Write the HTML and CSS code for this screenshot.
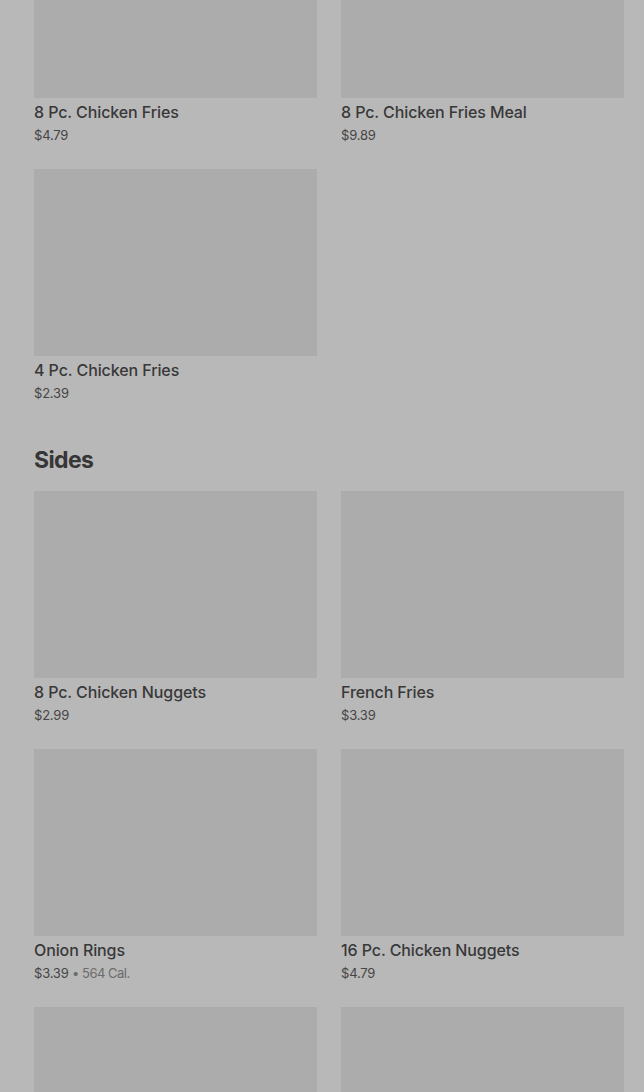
FILE: index.html
```html
<!DOCTYPE html>
<html lang="en">
<head>
  <meta charset="UTF-8" />
  <meta name="viewport" content="width=device-width, initial-scale=1.0" />
  <title>Menu</title>
  <link rel="stylesheet" href="styles.css">
</head>
<body>
  <main class="menu">
    <!-- Chicken Fries (scrolled part way) -->
    <section class="section section-scrolled">
      <div class="grid">
        <div class="item">
          <div class="thumb"></div>
          <div class="name">8 Pc. Chicken Fries</div>
          <div class="price">$4.79</div>
        </div>
        <div class="item">
          <div class="thumb"></div>
          <div class="name">8 Pc. Chicken Fries Meal</div>
          <div class="price">$9.89</div>
        </div>
        <div class="item">
          <div class="thumb"></div>
          <div class="name">4 Pc. Chicken Fries</div>
          <div class="price">$2.39</div>
        </div>
      </div>
    </section>

    <section class="section">
      <h2 class="section-title">Sides</h2>
      <div class="grid">
        <div class="item">
          <div class="thumb"></div>
          <div class="name">8 Pc. Chicken Nuggets</div>
          <div class="price">$2.99</div>
        </div>
        <div class="item">
          <div class="thumb"></div>
          <div class="name">French Fries</div>
          <div class="price">$3.39</div>
        </div>
        <div class="item">
          <div class="thumb"></div>
          <div class="name">Onion Rings</div>
          <div class="price">$3.39 <span class="cal">• 564 Cal.</span></div>
        </div>
        <div class="item">
          <div class="thumb"></div>
          <div class="name">16 Pc. Chicken Nuggets</div>
          <div class="price">$4.79</div>
        </div>
        <div class="item">
          <div class="thumb"></div>
        </div>
        <div class="item">
          <div class="thumb"></div>
        </div>
      </div>
    </section>
  </main>
</body>
</html>
```

FILE: styles.css
```css
* { box-sizing: border-box; margin: 0; padding: 0; }
body {
  font-family: Inter, "Noto Sans", sans-serif;
  background: #b8b8b8;
  color: #363636;
  overflow: hidden;
}
.menu {
  padding: 0 20px 0 34px;
}
/* page is scrolled: first row starts above the viewport */
.section-scrolled {
  margin-top: -89px;
}
.section-title {
  font-size: 23px;
  font-weight: 700;
  line-height: 32px;
  letter-spacing: -0.6px;
  color: #363636;
  margin-top: 41px;
  margin-bottom: 15px;
}
/* Item grid */
.grid {
  display: grid;
  grid-template-columns: 283px 283px;
  column-gap: 24px;
  row-gap: 24px;
}
.thumb {
  height: 187px;
  background: #acacac;
}
.name {
  margin-top: 4px;
  font-size: 16px;
  font-weight: 500;
  line-height: 20px;
  letter-spacing: -0.1px;
  color: #383838;
}
.price {
  height: 20px;
  margin-top: 3px;
  font-size: 13px;
  line-height: 20px;
  letter-spacing: -0.2px;
  color: #454545;
}
.cal {
  letter-spacing: -0.5px;
  color: #6c6c6c;
}
```
